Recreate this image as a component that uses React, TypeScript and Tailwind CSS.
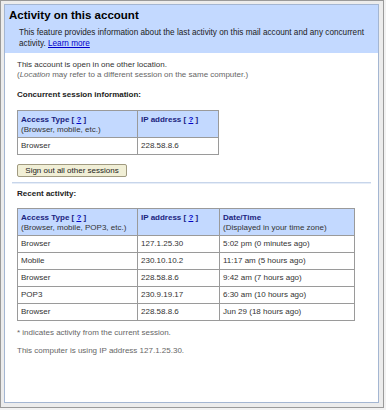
const font = { fontFamily: '"Liberation Sans", Arial, sans-serif' };

type Row = { type: string; ip: string; time?: string };

const concurrent: Row[] = [{ type: 'Browser', ip: '228.58.8.6' }];

const recent: Row[] = [
  { type: 'Browser', ip: '127.1.25.30', time: '5:02 pm (0 minutes ago)' },
  { type: 'Mobile', ip: '230.10.10.2', time: '11:17 am (5 hours ago)' },
  { type: 'Browser', ip: '228.58.8.6', time: '9:42 am (7 hours ago)' },
  { type: 'POP3', ip: '230.9.19.17', time: '6:30 am (10 hours ago)' },
  { type: 'Browser', ip: '228.58.8.6', time: 'Jun 29 (18 hours ago)' },
];

const Help = () => (
  <span className="font-bold text-[#1a237e]">
    {' '}[ <span className="text-[#0000cc] underline">?</span> ]
  </span>
);

function HeadCell({ title, help, sub, className }: { title: string; help?: boolean; sub?: string; className?: string }) {
  return (
    <th className={`border border-[#9a9a9a] bg-[#c3d9ff] px-[3px] pt-[4px] pb-[3px] text-left align-top font-normal leading-[9.5px] ${className ?? ''}`}>
      <div>
        <span className="font-bold text-[#1a237e]">{title}</span>
        {help && <Help />}
      </div>
      {sub && <div className="text-[#333]">{sub}</div>}
    </th>
  );
}

function Cell({ children }: { children: React.ReactNode }) {
  return <td className="h-[17px] border border-[#9a9a9a] px-[3px] leading-[10px] text-[#333]">{children}</td>;
}

export default function App() {
  return (
    <div className="w-[386px] h-[410px] bg-[#f2f2f2]" style={font}>
      <div className="w-[384px] h-[408px] border border-[#9a9a9a] bg-[#ececec] pt-[3px] pl-[3px]">
        <div className="w-[375px] h-[399px] border border-[#a4b6d2] bg-white text-[8px]">
          {/* Header band */}
          <div className="bg-[#c3d9ff] pl-[4px] pr-[5px] pt-[4px] pb-[4px]">
            <div className="text-[11.5px] font-bold leading-[13px] text-black">Activity on this account</div>
            <div className="mt-[5px] pl-[10px] text-[8.2px] leading-[11px] text-[#222]">
              This feature provides information about the last activity on this mail account and any concurrent activity.{' '}
              <span className="text-[#0000cc] underline">Learn more</span>
            </div>
          </div>

          {/* Concurrent sessions */}
          <div className="px-[12px] pt-[7px]">
            <div className="leading-[10px] text-[#333]">This account is open in one other location.</div>
            <div className="leading-[10px] text-[#666]">
              (<i>Location</i> may refer to a different session on the same computer.)
            </div>
            <div className="mt-[10px] font-bold leading-[10px] text-[#222]">Concurrent session information:</div>

            <table className="mt-[10px] w-[202px] table-fixed border-collapse border border-[#8a8a8a]">
              <thead>
                <tr>
                  <HeadCell className="w-[120px]" title="Access Type" help sub="(Browser, mobile, etc.)" />
                  <HeadCell title="IP address" help />
                </tr>
              </thead>
              <tbody>
                {concurrent.map((r, i) => (
                  <tr key={i}>
                    <Cell>{r.type}</Cell>
                    <Cell>{r.ip}</Cell>
                  </tr>
                ))}
              </tbody>
            </table>

            <button className="mt-[9px] h-[13px] w-[110px] rounded-[2px] border border-[#a09a80] bg-[#f1efd6] text-[8px] leading-[10px] text-[#222]">
              Sign out all other sessions
            </button>
          </div>

          <div className="mx-[7px] mt-[5px] h-[2px] border-t border-[#c7d5ea] bg-[#e6edf8]" />

          {/* Recent activity */}
          <div className="px-[12px] pt-[5px]">
            <div className="font-bold leading-[10px] text-[#222]">Recent activity:</div>

            <table className="mt-[9px] w-[338px] table-fixed border-collapse border border-[#8a8a8a]">
              <thead>
                <tr>
                  <HeadCell className="w-[120px]" title="Access Type" help sub="(Browser, mobile, POP3, etc.)" />
                  <HeadCell className="w-[82px]" title="IP address" help />
                  <HeadCell title="Date/Time" sub="(Displayed in your time zone)" />
                </tr>
              </thead>
              <tbody>
                {recent.map((r, i) => (
                  <tr key={i}>
                    <Cell>{r.type}</Cell>
                    <Cell>{r.ip}</Cell>
                    <Cell>{r.time}</Cell>
                  </tr>
                ))}
              </tbody>
            </table>

            <div className="mt-[7px] leading-[10px] text-[#666]">* indicates activity from the current session.</div>
            <div className="mt-[8px] leading-[10px] text-[#666]">This computer is using IP address 127.1.25.30.</div>
          </div>
        </div>
      </div>
    </div>
  );
}
